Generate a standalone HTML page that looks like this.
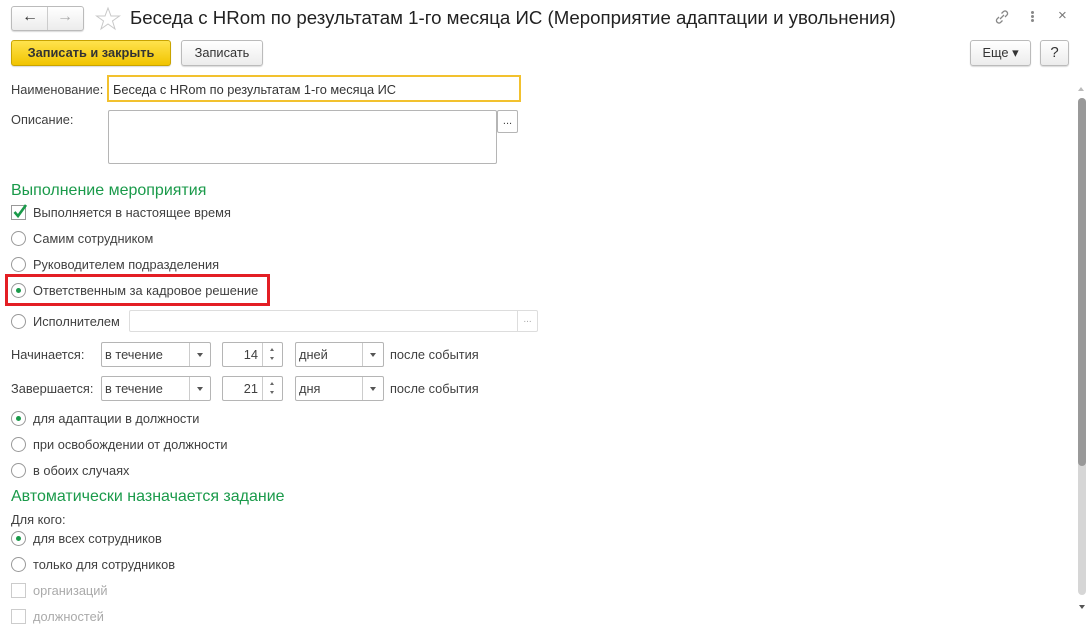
<!DOCTYPE html>
<html><head><meta charset="utf-8"><style>
*{box-sizing:border-box}
body{margin:0;width:1089px;height:627px;overflow:hidden;background:#fff;font-family:"Liberation Sans",Arial,sans-serif;font-size:12.8px;color:#404040;position:relative}
.a{position:absolute;white-space:nowrap}
.btn{position:absolute;border:1px solid #bbb;border-radius:3px;background:linear-gradient(#fff,#ececec);box-shadow:0 1px 1px rgba(0,0,0,.15);text-align:center;color:#333}
.rad{position:absolute;width:15px;height:15px;border:1px solid #999;border-radius:50%;background:#fff}
.rad.on::after{content:"";position:absolute;left:4px;top:4px;width:5px;height:5px;border-radius:50%;background:#1a9a4a}
.inp{position:absolute;border:1px solid #b5b5b5;background:#fff;border-radius:2px}
.g{color:#1a9a4a;font-size:16px}
.dd{position:absolute;border:1px solid #b5b5b5;border-radius:2px;background:#fff;height:25px;line-height:23px;padding-left:3px}
.dd .arr{position:absolute;right:0;top:0;width:21px;height:23px;border-left:1px solid #ccc}
.dd .arr::after{content:"";position:absolute;left:7px;top:10px;border:3px solid transparent;border-top:4px solid #555}
.sp{position:absolute;right:0;top:0;width:20px;height:23px;border-left:1px solid #ccc}
.sp::before{content:"";position:absolute;left:7px;top:3px;border:2.5px solid transparent;border-bottom:3px solid #666}
.sp::after{content:"";position:absolute;left:7px;top:14px;border:2.5px solid transparent;border-top:3px solid #666}
</style></head><body>
<div class="btn" style="left:11px;top:6px;width:73px;height:25px"></div>
<div class="a" style="left:47px;top:7px;height:23px;border-left:1px solid #ccc"></div>
<div class="a" style="left:22px;top:8px;font-size:16px;color:#333">&#8592;</div>
<div class="a" style="left:57px;top:8px;font-size:16px;color:#aaa">&#8594;</div>
<svg class="a" style="left:95px;top:6px" width="26" height="25" viewBox="0 0 26 25"><polygon points="13,2 16,10 24.5,10 17.5,15 20,23 13,18 6,23 8.5,15 1.5,10 10,10" fill="none" stroke="#c8c8c8" stroke-width="1"/></svg>
<div class="a" style="left:130px;top:7px;font-size:18.65px;color:#222">Беседа с HRom по результатам 1-го месяца ИС (Мероприятие адаптации и увольнения)</div>
<svg class="a" style="left:993px;top:9px" width="18" height="16" viewBox="0 0 18 16"><path d="M7 10l4-4M6 8l-2 2a2.5 2.5 0 0 0 3.5 3.5l2-2M12 8l2-2a2.5 2.5 0 0 0-3.5-3.5l-2 2" fill="none" stroke="#888" stroke-width="1.3"/></svg>
<div class="a" style="left:1031px;top:11px;width:3px;height:3px;background:#888;border-radius:50%;box-shadow:0 4px 0 #888,0 8px 0 #888"></div>
<div class="a" style="left:1058px;top:7px;font-size:15px;color:#777">×</div>
<div class="btn" style="left:11px;top:40px;width:160px;height:26px;line-height:24px;background:linear-gradient(#ffe34d,#f1c400);border-color:#c9a400;font-weight:bold;color:#333">Записать и закрыть</div>
<div class="btn" style="left:181px;top:40px;width:82px;height:26px;line-height:24px">Записать</div>
<div class="btn" style="left:970px;top:40px;width:61px;height:26px;line-height:24px">Еще ▾</div>
<div class="btn" style="left:1040px;top:40px;width:29px;height:26px;line-height:24px;font-size:15px">?</div>
<div class="a" style="left:11px;top:82px">Наименование:</div>
<div class="a" style="left:107px;top:75px;width:414px;height:27px;border:2px solid #f2c12e;padding:5px 4px;color:#333">Беседа с HRom по результатам 1-го месяца ИС</div>
<div class="a" style="left:11px;top:112px">Описание:</div>
<div class="inp" style="left:108px;top:110px;width:389px;height:54px"></div>
<div class="inp" style="left:497px;top:110px;width:21px;height:23px;text-align:center;font-size:11px;line-height:20px">...</div>
<div class="a g" style="left:11px;top:182px">Выполнение мероприятия</div>
<div class="a" style="left:11px;top:205px;width:15px;height:15px;border:1px solid #999;background:#fff"></div>
<svg class="a" style="left:11px;top:202px" width="18" height="18"><path d="M3.5 10l3.5 4 8-11" fill="none" stroke="#1a9a4a" stroke-width="2.6"/></svg>
<div class="a" style="left:33px;top:205px">Выполняется в настоящее время</div>
<div class="rad" style="left:11px;top:231px"></div><div class="a" style="left:33px;top:231px">Самим сотрудником</div>
<div class="rad" style="left:11px;top:257px"></div><div class="a" style="left:33px;top:257px">Руководителем подразделения</div>
<div class="a" style="left:5px;top:274px;width:265px;height:32px;border:3px solid #e31e24"></div>
<div class="rad on" style="left:11px;top:283px"></div><div class="a" style="left:33px;top:283px">Ответственным за кадровое решение</div>
<div class="rad" style="left:11px;top:314px"></div><div class="a" style="left:33px;top:314px">Исполнителем</div>
<div class="inp" style="left:129px;top:310px;width:409px;height:22px;border-color:#ddd"></div>
<div class="a" style="left:517px;top:311px;height:20px;width:20px;border-left:1px solid #ddd;color:#aaa;font-size:10px;text-align:center;line-height:18px">...</div>
<div class="a" style="left:11px;top:347px">Начинается:</div>
<div class="dd" style="left:101px;top:342px;width:110px">в течение<div class="arr"></div></div>
<div class="dd" style="left:222px;top:342px;width:61px;text-align:right;padding-right:24px">14<div class="sp"></div></div>
<div class="dd" style="left:295px;top:342px;width:89px">дней<div class="arr"></div></div>
<div class="a" style="left:390px;top:347px">после события</div>
<div class="a" style="left:11px;top:381px">Завершается:</div>
<div class="dd" style="left:101px;top:376px;width:110px">в течение<div class="arr"></div></div>
<div class="dd" style="left:222px;top:376px;width:61px;text-align:right;padding-right:24px">21<div class="sp"></div></div>
<div class="dd" style="left:295px;top:376px;width:89px">дня<div class="arr"></div></div>
<div class="a" style="left:390px;top:381px">после события</div>
<div class="rad on" style="left:11px;top:411px"></div><div class="a" style="left:33px;top:411px">для адаптации в должности</div>
<div class="rad" style="left:11px;top:437px"></div><div class="a" style="left:33px;top:437px">при освобождении от должности</div>
<div class="rad" style="left:11px;top:463px"></div><div class="a" style="left:33px;top:463px">в обоих случаях</div>
<div class="a g" style="left:11px;top:488px">Автоматически назначается задание</div>
<div class="a" style="left:11px;top:512px">Для кого:</div>
<div class="rad on" style="left:11px;top:531px"></div><div class="a" style="left:33px;top:531px">для всех сотрудников</div>
<div class="rad" style="left:11px;top:557px"></div><div class="a" style="left:33px;top:557px">только для сотрудников</div>
<div class="a" style="left:11px;top:583px;width:15px;height:15px;border:1px solid #ccc"></div><div class="a" style="left:33px;top:583px;color:#aaa">организаций</div>
<div class="a" style="left:11px;top:609px;width:15px;height:15px;border:1px solid #ccc"></div><div class="a" style="left:33px;top:609px;color:#aaa">должностей</div>
<div class="a" style="left:1078px;top:84px;border:3px solid transparent;border-bottom:4px solid #bbb"></div>
<div class="a" style="left:1078px;top:98px;width:8px;height:497px;border-radius:4px;background:#d6d6d6"></div>
<div class="a" style="left:1078px;top:98px;width:8px;height:368px;border-radius:4px;background:#999"></div>
<div class="a" style="left:1079px;top:605px;border:3px solid transparent;border-top:4px solid #555"></div>
</body></html>
